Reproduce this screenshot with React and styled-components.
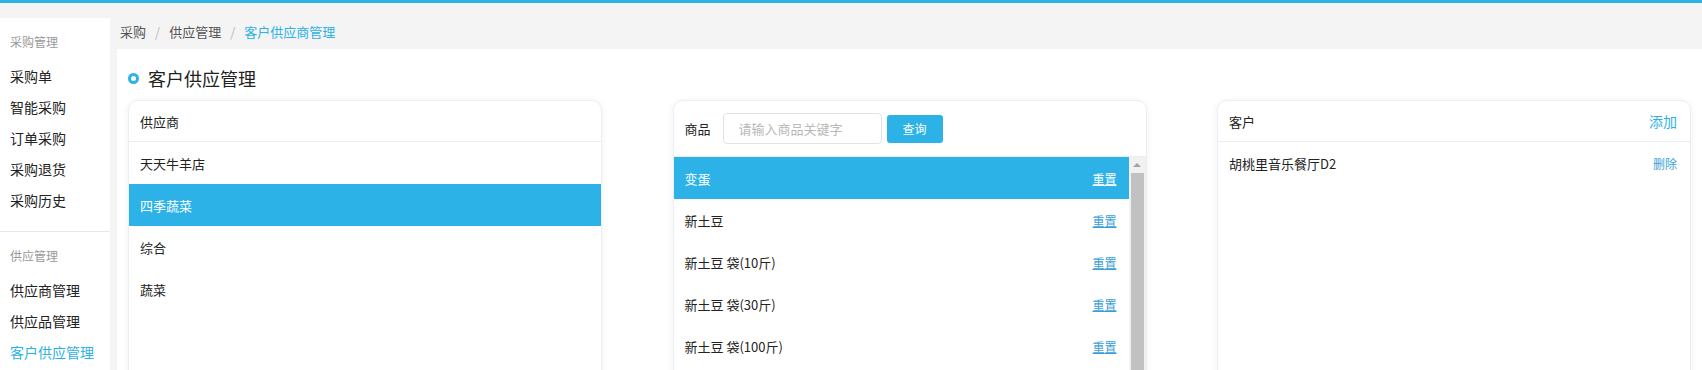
import React from "react";
import styled, { createGlobalStyle } from "styled-components";

const BLUE = "#2cb2e6";

const Global = createGlobalStyle`
  html, body { margin: 0; padding: 0; background: #f4f4f4; overflow: hidden; }
  body { font-family: "Noto Sans CJK SC", "Noto Sans", sans-serif; color: #333; }
  * { box-sizing: border-box; }
`;

const Page = styled.div`
  height: 100vh;
  overflow: hidden;
  border-top: 3px solid ${BLUE};
  display: flex;
  flex-direction: column;
`;

const Body = styled.div`
  flex: 1;
  display: flex;
  min-height: 0;
`;

const Sidebar = styled.nav`
  width: 110px;
  margin-top: 15px;
  margin-right: 7px;
  background: #fff;
  flex-shrink: 0;
`;

const Group = styled.div`
  padding: 12px 0 15px;
  & + & { border-top: 1px solid #e8e8e8; }
`;

const GroupLabel = styled.div`
  height: 24px;
  line-height: 24px;
  padding-left: 10px;
  font-size: 12px;
  color: #999;
  margin-bottom: 7px;
`;

const NavItem = styled.div`
  height: 31px;
  line-height: 31px;
  padding-left: 10px;
  font-size: 14px;
  color: ${(p) => (p.$active ? BLUE : "#222")};
  white-space: nowrap;
`;

const Main = styled.div`
  flex: 1;
  display: flex;
  flex-direction: column;
  min-width: 0;
`;

const Breadcrumb = styled.div`
  height: 46px;
  flex-shrink: 0;
  padding: 17px 0 0 3px;
  line-height: 24px;
  font-size: 13px;
  display: flex;
`;

const Crumb = styled.span`
  color: ${(p) => (p.$active ? BLUE : "#555")};
`;

const Sep = styled.span`
  color: #bbb;
  margin: 0 9px;
`;

const Content = styled.div`
  flex: 1;
  background: #fff;
  padding: 17px 11px 0;
`;

const TitleRow = styled.div`
  height: 24px;
  display: flex;
  align-items: center;
  margin-bottom: 10px;
`;

const Ring = styled.span`
  width: 11px;
  height: 11px;
  border: 3px solid ${BLUE};
  border-radius: 50%;
  margin-right: 9px;
`;

const Title = styled.h1`
  margin: 0;
  font-size: 18px;
  font-weight: 400;
  color: #222;
`;

const Panels = styled.div`
  display: grid;
  grid-template-columns: repeat(3, 474px);
  justify-content: space-between;
`;

const Panel = styled.section`
  height: 520px;
  border: 1px solid #edeef3;
  border-radius: 10px;
  box-shadow: 0 1px 6px rgba(30, 40, 90, 0.07);
  background: #fff;
  display: flex;
  flex-direction: column;
  overflow: hidden;
`;

const PanelHead = styled.div`
  height: ${(p) => (p.$tall ? "56px" : "41px")};
  flex-shrink: 0;
  border-bottom: 1px solid #ebedf3;
  display: flex;
  align-items: center;
  justify-content: space-between;
  padding: 0 13px 0 11px;
  font-size: 13px;
  color: #222;
`;

const HeadLeft = styled.div`
  display: flex;
  align-items: center;
`;

const SearchInput = styled.input`
  width: 159px;
  height: 31px;
  margin-left: 12px;
  border: 1px solid #e1e3ea;
  border-radius: 4px;
  padding: 0 15px;
  font-family: inherit;
  font-size: 13px;
  outline: none;
  &::placeholder { color: #b8b8b8; }
`;

const SearchButton = styled.button`
  width: 56px;
  height: 28px;
  margin-left: 5px;
  border: none;
  border-radius: 3px;
  background: ${BLUE};
  color: #fff;
  font-family: inherit;
  font-size: 12px;
`;

const ScrollArea = styled.div`
  flex: 1;
  min-height: 0;
  display: flex;
`;

const List = styled.div`
  flex: 1;
  min-width: 0;
  overflow: hidden;
`;

const ScrollBar = styled.div`
  width: 17px;
  flex-shrink: 0;
  background: #f1f1f1;
  display: flex;
  flex-direction: column;
  align-items: center;
`;

const ScrollUp = styled.div`
  height: 16px;
  width: 100%;
  display: flex;
  align-items: center;
  justify-content: center;
  &::before {
    content: "";
    border-left: 4px solid transparent;
    border-right: 4px solid transparent;
    border-bottom: 4px solid #a3a3a3;
  }
`;

const ScrollThumb = styled.div`
  width: 13px;
  height: 260px;
  background: #c1c1c1;
`;

const Row = styled.div`
  height: 42px;
  display: flex;
  align-items: center;
  justify-content: space-between;
  padding: 0 ${(p) => (p.$pr || 12)}px 0 11px;
  font-size: 13px;
  background: ${(p) => (p.$active ? BLUE : "#fff")};
  color: ${(p) => (p.$active ? "#fff" : "#222")};
`;

const LinkText = styled.span`
  font-size: 12px;
  color: ${(p) => (p.$light ? "#fff" : "#3a9fd9")};
  text-decoration: ${(p) => (p.$underline ? "underline" : "none")};
`;

const HeadLink = styled.span`
  font-size: 14px;
  color: ${BLUE};
`;

const suppliers = ["天天牛羊店", "四季蔬菜", "综合", "蔬菜"];
const goods = [
  "变蛋",
  "新土豆",
  "新土豆 袋(10斤)",
  "新土豆 袋(30斤)",
  "新土豆 袋(100斤)",
  "土豆",
  "西红柿",
  "黄瓜",
  "茄子",
  "青椒",
  "胡萝卜",
];

export default function App() {
  return (
    <>
      <Global />
      <Page>
        <Body>
          <Sidebar>
            <Group>
              <GroupLabel>采购管理</GroupLabel>
              <NavItem>采购单</NavItem>
              <NavItem>智能采购</NavItem>
              <NavItem>订单采购</NavItem>
              <NavItem>采购退货</NavItem>
              <NavItem>采购历史</NavItem>
            </Group>
            <Group>
              <GroupLabel>供应管理</GroupLabel>
              <NavItem>供应商管理</NavItem>
              <NavItem>供应品管理</NavItem>
              <NavItem $active>客户供应管理</NavItem>
            </Group>
          </Sidebar>
          <Main>
            <Breadcrumb>
              <Crumb>采购</Crumb>
              <Sep>/</Sep>
              <Crumb>供应管理</Crumb>
              <Sep>/</Sep>
              <Crumb $active>客户供应商管理</Crumb>
            </Breadcrumb>
            <Content>
              <TitleRow>
                <Ring />
                <Title>客户供应管理</Title>
              </TitleRow>
              <Panels>
                <Panel>
                  <PanelHead>供应商</PanelHead>
                  <List>
                    {suppliers.map((s, i) => (
                      <Row key={s} $active={i === 1}>
                        {s}
                      </Row>
                    ))}
                  </List>
                </Panel>
                <Panel>
                  <PanelHead $tall>
                    <HeadLeft>
                      商品
                      <SearchInput placeholder="请输入商品关键字" />
                      <SearchButton>查询</SearchButton>
                    </HeadLeft>
                  </PanelHead>
                  <ScrollArea>
                    <List>
                      {goods.map((g, i) => (
                        <Row key={g + i} $active={i === 0}>
                          {g}
                          <LinkText $underline $light={i === 0}>
                            重置
                          </LinkText>
                        </Row>
                      ))}
                    </List>
                    <ScrollBar>
                      <ScrollUp />
                      <ScrollThumb />
                    </ScrollBar>
                  </ScrollArea>
                </Panel>
                <Panel>
                  <PanelHead>
                    客户
                    <HeadLink>添加</HeadLink>
                  </PanelHead>
                  <List>
                    <Row $pr={13}>
                      胡桃里音乐餐厅D2
                      <LinkText>删除</LinkText>
                    </Row>
                  </List>
                </Panel>
              </Panels>
            </Content>
          </Main>
        </Body>
      </Page>
    </>
  );
}
